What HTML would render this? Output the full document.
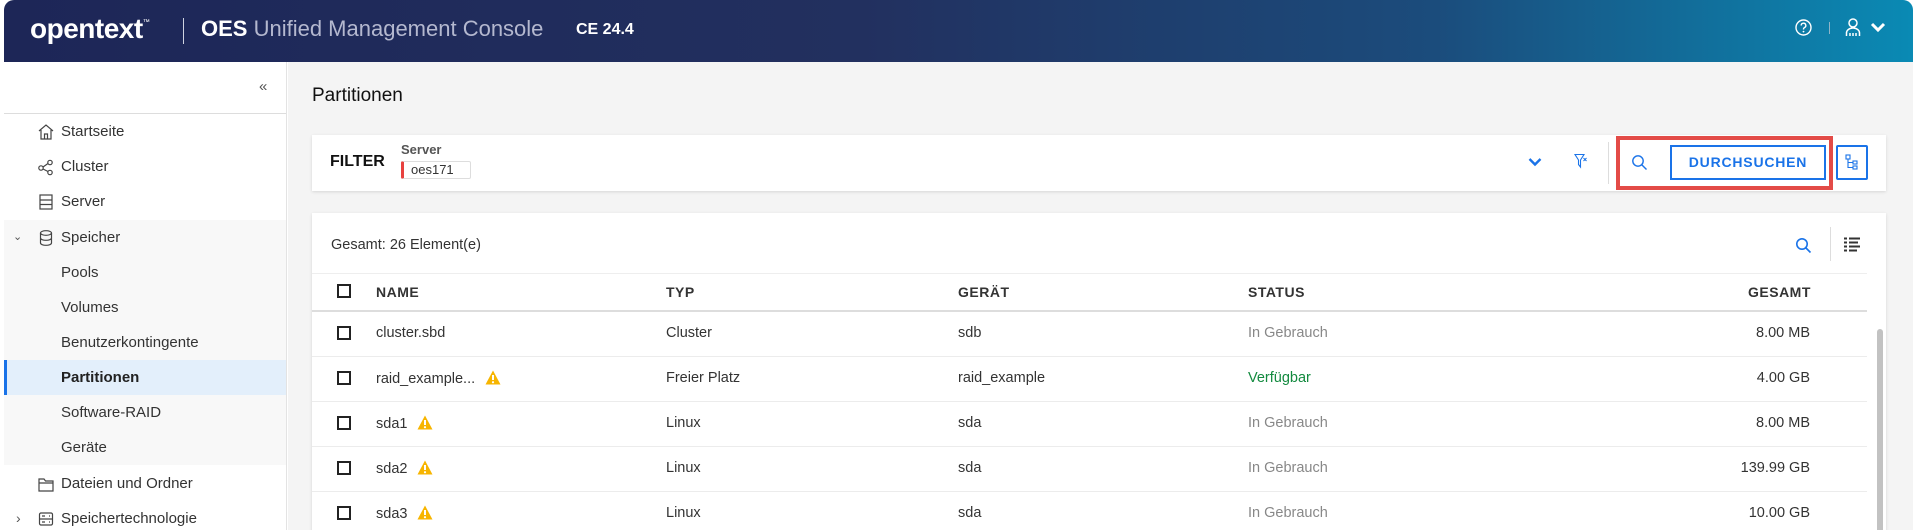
<!DOCTYPE html>
<html><head><meta charset="utf-8"><style>
*{box-sizing:border-box;margin:0;padding:0}
html,body{width:1913px;height:530px;overflow:hidden}
body{background:#fff;font-family:"Liberation Sans",sans-serif;position:relative;color:#222}
#wrap{position:absolute;left:0;top:0;width:1913px;height:530px;overflow:hidden}
.hdr{position:absolute;left:4px;top:0;width:1909px;height:62px;border-radius:10px 10px 0 0;background:linear-gradient(90deg,#1d2657 0%,#22305f 45%,#1b4c7c 75%,#0a8ab4 100%)}
.abs{position:absolute;white-space:nowrap}
.side{position:absolute;left:4px;top:62px;width:283px;height:468px;background:#fff;border-right:1px solid #e3e3e3;overflow:hidden}
.main{position:absolute;left:288px;top:62px;width:1625px;height:468px;background:#f4f4f4;overflow:hidden}
.nav{position:absolute;left:0;width:283px;height:35px;font-size:15px;color:#333;line-height:35px}
.nav span{position:absolute;left:57px}
.nav svg{position:absolute;left:33px;top:9px}
.card{position:absolute;background:#fff;box-shadow:0 1px 3px rgba(0,0,0,.12)}
.cb{position:absolute;width:14px;height:14px;border:2px solid #222;left:25px}
.th{position:absolute;font-size:14px;font-weight:bold;color:#333;letter-spacing:.5px}
.td{position:absolute;font-size:14.5px;color:#333}
.row{position:absolute;left:0;width:1555px;height:1px;background:#ececec}
.warn{display:inline-block;vertical-align:-2px;margin-left:10px}
</style></head><body><div id="wrap">
<div class="hdr">
 <div class="abs" style="left:26px;top:13px;font-size:28px;font-weight:bold;color:#fff;letter-spacing:-0.5px">opentext<sup style="font-size:7px;font-weight:normal;vertical-align:14px">™</sup></div>
 <div class="abs" style="left:179px;top:18px;width:1px;height:26px;background:#cfd3e0"></div>
 <div class="abs" style="left:197px;top:16px;font-size:22px;color:#fff;font-weight:bold">OES <span style="color:#b4b8cf;font-weight:normal">Unified Management Console</span></div>
 <div class="abs" style="left:572px;top:21px;font-size:16px;color:#fff;font-weight:bold">CE 24.4</div>
 <svg class="abs" style="left:1791px;top:19px" width="17" height="17" viewBox="0 0 17 17"><circle cx="8.5" cy="8.5" r="7.5" fill="none" stroke="#fff" stroke-width="1.4"/><path d="M6.2 6.5a2.3 2.3 0 1 1 3.2 2.1c-.6.3-.9.7-.9 1.4v.5" fill="none" stroke="#fff" stroke-width="1.4"/><circle cx="8.5" cy="12.6" r=".9" fill="#fff"/></svg>
 <div class="abs" style="left:1825px;top:22px;width:1px;height:12px;background:#8fb4c8"></div>
 <svg class="abs" style="left:1841px;top:18px" width="16" height="19" viewBox="0 0 16 19"><circle cx="8" cy="5" r="4" fill="none" stroke="#fff" stroke-width="1.5"/><path d="M1.5 18v-3a6.5 5 0 0 1 13 0v3M5 15v3M8 15v3M11 15v3" fill="none" stroke="#fff" stroke-width="1.5"/></svg>
 <svg class="abs" style="left:1866px;top:22px" width="16" height="11" viewBox="0 0 16 11"><path d="M2 2l6 6 6-6" fill="none" stroke="#fff" stroke-width="3"/></svg>
</div>
<div class="side">
 <div class="abs" style="left:255px;top:16px;font-size:15px;color:#555">«</div>
 <div class="abs" style="left:0;top:51px;width:283px;height:1px;background:#ddd"></div>
 <div class="abs" style="left:0;top:158px;width:283px;height:245px;background:#f8f8f8"></div>
 <div class="nav" style="top:52px"><svg width="18" height="18" viewBox="0 0 18 18"><path d="M2 8L9 2l7 6M4 7v9h10V7M7.5 16v-5h3v5" fill="none" stroke="#444" stroke-width="1.2"/></svg><span>Startseite</span></div>
 <div class="nav" style="top:87px"><svg width="18" height="18" viewBox="0 0 18 18"><circle cx="4" cy="10" r="2.2" fill="none" stroke="#444" stroke-width="1.2"/><circle cx="13" cy="4.5" r="2.2" fill="none" stroke="#444" stroke-width="1.2"/><circle cx="13" cy="14.5" r="2.2" fill="none" stroke="#444" stroke-width="1.2"/><path d="M6 9l5-3.5M6 11l5 2.5" stroke="#444" stroke-width="1.2"/></svg><span>Cluster</span></div>
 <div class="nav" style="top:122px"><svg width="18" height="18" viewBox="0 0 18 18"><rect x="3" y="2" width="12" height="14" fill="none" stroke="#444" stroke-width="1.2"/><path d="M3 7h12M3 11.5h12" stroke="#444" stroke-width="1.2"/></svg><span>Server</span></div>
 <div class="nav" style="top:158px"><div class="abs" style="left:9px;top:0;font-size:11px;color:#555">&#8964;</div><svg width="18" height="18" viewBox="0 0 18 18"><ellipse cx="9" cy="4" rx="5.5" ry="2.3" fill="none" stroke="#444" stroke-width="1.2"/><path d="M3.5 4v10c0 1.3 2.5 2.3 5.5 2.3s5.5-1 5.5-2.3V4M3.5 9c0 1.3 2.5 2.3 5.5 2.3s5.5-1 5.5-2.3" fill="none" stroke="#444" stroke-width="1.2"/></svg><span>Speicher</span></div>
 <div class="nav" style="top:193px"><span>Pools</span></div>
 <div class="nav" style="top:228px"><span>Volumes</span></div>
 <div class="nav" style="top:263px"><span>Benutzerkontingente</span></div>
 <div class="nav" style="top:298px;background:#e3effb;border-left:3px solid #1a73e8"><span style="left:54px;font-weight:bold;color:#222">Partitionen</span></div>
 <div class="nav" style="top:333px"><span>Software-RAID</span></div>
 <div class="nav" style="top:368px"><span>Geräte</span></div>
 <div class="nav" style="top:404px"><svg width="18" height="18" viewBox="0 0 18 18"><path d="M2 4h5l1.5 2H16v10H2z M2 8h14" fill="none" stroke="#444" stroke-width="1.2"/></svg><span>Dateien und Ordner</span></div>
 <div class="nav" style="top:439px"><div class="abs" style="left:12px;top:0;font-size:14px;color:#555">›</div><svg width="18" height="18" viewBox="0 0 18 18"><rect x="2.5" y="3" width="13" height="12" rx="1.5" fill="none" stroke="#444" stroke-width="1.2"/><path d="M2.5 9h13M5 6h3M5 12h3M12 6h1M12 12h1" stroke="#444" stroke-width="1.2"/></svg><span>Speichertechnologie</span></div>
</div>
<div class="main">
 <div class="abs" style="left:24px;top:23px;font-size:19px;color:#111;font-weight:500">Partitionen</div>
 <div class="card" style="left:24px;top:73px;width:1574px;height:56px">
  <div class="abs" style="left:18px;top:18px;font-size:16px;font-weight:bold;color:#111">FILTER</div>
  <div class="abs" style="left:89px;top:7px;font-size:13px;font-weight:bold;color:#555">Server</div>
  <div class="abs" style="left:89px;top:26px;width:70px;height:18px;border:1px solid #ddd;border-left:3px solid #e8413f;border-radius:2px;font-size:13px;color:#333;padding-left:7px;line-height:16px">oes171</div>
  <svg class="abs" style="left:1216px;top:22px" width="14" height="10" viewBox="0 0 14 10"><path d="M1.5 2l5.5 5.5L12.5 2" fill="none" stroke="#1a73e8" stroke-width="2.4"/></svg>
  <svg class="abs" style="left:1262px;top:18px" width="14" height="16" viewBox="0 0 14 16"><path d="M1 1.5h9L6.5 7v7L4.5 11.5V7z" fill="none" stroke="#1a73e8" stroke-width="1.1"/><path d="M9.5 5l3 3M12.5 5l-3 3" stroke="#1a73e8" stroke-width="1"/></svg>
  <div class="abs" style="left:1296px;top:7px;width:1px;height:42px;background:#ddd"></div>
  <div class="abs" style="left:1304px;top:1px;width:217px;height:54px;border:4px solid #e34b47"></div>
  <svg class="abs" style="left:1319px;top:19px" width="17" height="17" viewBox="0 0 17 17"><circle cx="7" cy="7" r="5.2" fill="none" stroke="#1a73e8" stroke-width="1.4"/><path d="M11 11l4.5 4.5" stroke="#1a73e8" stroke-width="1.4"/></svg>
  <div class="abs" style="left:1358px;top:10px;width:156px;height:35px;border:2px solid #1a73e8;color:#1a73e8;font-size:14px;font-weight:bold;text-align:center;line-height:31px;letter-spacing:.8px">DURCHSUCHEN</div>
  <div class="abs" style="left:1524px;top:10px;width:32px;height:35px;border:2px solid #1a73e8;border-radius:2px"><svg style="position:absolute;left:7px;top:7px" width="14" height="17" viewBox="0 0 14 17"><rect x="1" y="1" width="4" height="4" fill="none" stroke="#1a73e8" stroke-width="1.1"/><rect x="8" y="7" width="4" height="3" fill="none" stroke="#1a73e8" stroke-width="1.1"/><rect x="8" y="12" width="4" height="3" fill="none" stroke="#1a73e8" stroke-width="1.1"/><path d="M3 5v8.5h5M3 8.5h5" fill="none" stroke="#1a73e8" stroke-width="1.1"/></svg></div>
 </div>
 <div class="card" style="left:24px;top:151px;width:1574px;height:330px">
  <div class="abs" style="left:19px;top:24px;font-size:14.5px;color:#333">Gesamt: 26 Element(e)</div>
  <svg class="abs" style="left:1483px;top:24px" width="17" height="17" viewBox="0 0 17 17"><circle cx="7" cy="7" r="5.2" fill="none" stroke="#1a73e8" stroke-width="1.6"/><path d="M11 11l4.5 4.5" stroke="#1a73e8" stroke-width="1.6"/></svg>
  <div class="abs" style="left:1518px;top:14px;width:1px;height:34px;background:#ddd"></div>
  <svg class="abs" style="left:1532px;top:24px" width="16" height="15" viewBox="0 0 16 15"><path d="M0 1.5h3M5 1.5h11M0 5.5h3M5 5.5h9M0 9.5h3M5 9.5h11M0 13.5h3M5 13.5h8" stroke="#333" stroke-width="2"/></svg>
  <div class="row" style="top:60px;background:#eee"></div>
  <div class="cb" style="top:71px"></div>
  <div class="th" style="left:64px;top:71px">NAME</div>
  <div class="th" style="left:354px;top:71px">TYP</div>
  <div class="th" style="left:646px;top:71px">GERÄT</div>
  <div class="th" style="left:936px;top:71px">STATUS</div>
  <div class="th" style="left:1436px;top:71px">GESAMT</div>
  <div class="row" style="top:97px;height:2px;background:#ddd"></div>
  <div class="cb" style="top:113px"></div><div class="td" style="left:64px;top:112px">cluster.sbd</div><div class="td" style="left:354px;top:112px">Cluster</div><div class="td" style="left:646px;top:112px">sdb</div><div class="td" style="left:936px;top:112px;color:#888">In Gebrauch</div><div class="td" style="right:76px;top:112px">8.00 MB</div>
  <div class="row" style="top:143px"></div>
  <div class="cb" style="top:158px"></div><div class="td" style="left:64px;top:157px">raid_example...<svg class="warn" width="16" height="15" viewBox="0 0 16 15"><path d="M8 0.5L15.5 14.5H0.5z" fill="#f7b500"/><path d="M8 5v5" stroke="#fff" stroke-width="2"/><circle cx="8" cy="12.2" r="1.1" fill="#fff"/></svg></div><div class="td" style="left:354px;top:157px">Freier Platz</div><div class="td" style="left:646px;top:157px">raid_example</div><div class="td" style="left:936px;top:157px;color:#138a3f">Verfügbar</div><div class="td" style="right:76px;top:157px">4.00 GB</div>
  <div class="row" style="top:188px"></div>
  <div class="cb" style="top:203px"></div><div class="td" style="left:64px;top:202px">sda1<svg class="warn" width="16" height="15" viewBox="0 0 16 15"><path d="M8 0.5L15.5 14.5H0.5z" fill="#f7b500"/><path d="M8 5v5" stroke="#fff" stroke-width="2"/><circle cx="8" cy="12.2" r="1.1" fill="#fff"/></svg></div><div class="td" style="left:354px;top:202px">Linux</div><div class="td" style="left:646px;top:202px">sda</div><div class="td" style="left:936px;top:202px;color:#888">In Gebrauch</div><div class="td" style="right:76px;top:202px">8.00 MB</div>
  <div class="row" style="top:233px"></div>
  <div class="cb" style="top:248px"></div><div class="td" style="left:64px;top:247px">sda2<svg class="warn" width="16" height="15" viewBox="0 0 16 15"><path d="M8 0.5L15.5 14.5H0.5z" fill="#f7b500"/><path d="M8 5v5" stroke="#fff" stroke-width="2"/><circle cx="8" cy="12.2" r="1.1" fill="#fff"/></svg></div><div class="td" style="left:354px;top:247px">Linux</div><div class="td" style="left:646px;top:247px">sda</div><div class="td" style="left:936px;top:247px;color:#888">In Gebrauch</div><div class="td" style="right:76px;top:247px">139.99 GB</div>
  <div class="row" style="top:278px"></div>
  <div class="cb" style="top:293px"></div><div class="td" style="left:64px;top:292px">sda3<svg class="warn" width="16" height="15" viewBox="0 0 16 15"><path d="M8 0.5L15.5 14.5H0.5z" fill="#f7b500"/><path d="M8 5v5" stroke="#fff" stroke-width="2"/><circle cx="8" cy="12.2" r="1.1" fill="#fff"/></svg></div><div class="td" style="left:354px;top:292px">Linux</div><div class="td" style="left:646px;top:292px">sda</div><div class="td" style="left:936px;top:292px;color:#888">In Gebrauch</div><div class="td" style="right:76px;top:292px">10.00 GB</div>
  <div class="abs" style="left:1565px;top:116px;width:6px;height:220px;background:#c2c2c2;border-radius:3px"></div>
 </div>
</div>
</div></body></html>
